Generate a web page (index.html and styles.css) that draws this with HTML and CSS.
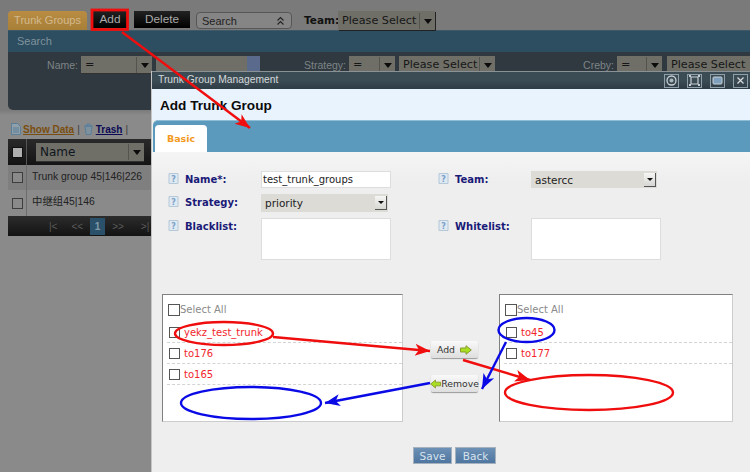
FILE: index.html
```html
<!DOCTYPE html>
<html lang="en">
<head>
<meta charset="utf-8">
<title>Trunk Group Management</title>
<link rel="stylesheet" href="styles.css">
</head>
<body>
<div class="page">
  <div class="toolbar">
    <div class="tab-title">Trunk Groups</div>
    <div class="blk add">Add</div>
    <div class="blk del">Delete</div>
    <div class="search-sel"><span>Search</span><svg width="9" height="10" viewBox="0 0 9 10"><path d="M1.5 4.5L4.5 1.5L7.5 4.5M1.5 8.5L4.5 5.5L7.5 8.5" fill="none" stroke="#222" stroke-width="1.1"/></svg></div>
    <b class="team">Team:</b>
    <div class="sel sel-team"><span>Please Select</span><i class="drop"></i></div>
  </div>
  <div class="searchbar">Search</div>
  <div class="filter">
    <span class="flabel l-name">Name:</span>
    <div class="sel s1"><span>=</span><i class="drop"></i></div>
    <div class="sel s2"><i class="drop-blue"></i></div>
    <span class="flabel l-strat">Strategy:</span>
    <div class="sel s3"><span>=</span><i class="drop"></i></div>
    <div class="sel s4"><span>Please Select</span><i class="drop"></i></div>
    <span class="flabel l-creby">Creby:</span>
    <div class="sel s5"><span>=</span><i class="drop"></i></div>
    <div class="sel s6"><span>Please Select</span></div>
  </div>
  <div class="links">
    <svg class="licon" width="10" height="12" viewBox="0 0 10 12"><path d="M.5.5H6.5L9.5 3.5V11.5H.5Z" fill="#8fa0aa" stroke="#5b7f99"/><path d="M2 5H8M2 7H8M2 9H8" stroke="#5b7f99"/></svg>
    <a class="show">Show Data</a><span class="bar">|</span>
    <svg class="licon" width="11" height="12" viewBox="0 0 11 12"><path d="M1 3H10M4 3V1H7V3M2 3L3 11.500H8L9 3Z" fill="#7d919e" stroke="#5b7f99"/></svg>
    <a class="trash">Trash</a><span class="bar">|</span>
  </div>
  <div class="grid-head">
    <div class="hcheck"><i class="cb light"></i></div>
    <div class="hname"><div class="sel s-name"><span>Name</span><i class="drop"></i></div></div>
  </div>
  <div class="grow r1"><div class="ccheck"><i class="cb"></i></div><div class="ctext">Trunk group 45|146|226</div></div>
  <div class="grow r2"><div class="ccheck"><i class="cb"></i></div><div class="ctext">中继组45|146</div></div>
  <div class="pager"><span class="p1">|&lt;</span><span class="p2">&lt;&lt;</span><b class="p3">1</b><span class="p4">&gt;&gt;</span><span class="p5">&gt;|</span></div>

  <div class="dialog">
    <div class="dtitle">
      <span class="dtitle-text">Trunk Group Management</span>
      <span class="wbtn"><svg width="13" height="13" viewBox="0 0 13 13"><circle cx="6.500" cy="6.500" r="4.500" fill="none" stroke="#c8d0d6" stroke-width="1.300"/><circle cx="6.500" cy="6.500" r="2" fill="#aab6be"/></svg></span>
      <span class="wbtn"><svg width="13" height="13" viewBox="0 0 13 13"><path d="M3 3H10V10H3Z" fill="none" stroke="#c8d0d6" stroke-width="1.200"/><path d="M1 1H3V3H1ZM10 1H12V3H10ZM1 10H3V12H1ZM10 10H12V12H10Z" fill="#c8d0d6"/></svg></span>
      <span class="wbtn"><svg width="13" height="13" viewBox="0 0 13 13"><rect x="2" y="3" width="9" height="7" rx="1" fill="#7fa0bc" stroke="#c8d0d6"/></svg></span>
      <span class="wbtn"><svg width="9" height="9" viewBox="0 0 9 9"><path d="M1.500 1.500L7.500 7.500M7.500 1.500L1.500 7.500" stroke="#d8dcde" stroke-width="1.200"/></svg></span>
    </div>
    <div class="dhead">Add Trunk Group</div>
    <div class="tabband"><div class="tab-basic">Basic</div></div>
    <div class="dbody">
      <div class="form">
        <svg class="help" viewBox="0 0 10 11"><path d="M.5.5H9.500V10.500H.5Z" fill="#dfe9f2" stroke="#b5c8d8"/><text x="5" y="8.500" text-anchor="middle">?</text></svg>
        <label>Name*:</label>
        <div class="input fld-input">test_trunk_groups</div>
        <svg class="help" viewBox="0 0 10 11"><path d="M.5.5H9.500V10.500H.5Z" fill="#dfe9f2" stroke="#b5c8d8"/><text x="5" y="8.500" text-anchor="middle">?</text></svg>
        <label>Team:</label>
        <div class="wsel w-team"><span>astercc</span><i class="wdrop"></i></div>

        <svg class="help" viewBox="0 0 10 11"><path d="M.5.5H9.500V10.500H.5Z" fill="#dfe9f2" stroke="#b5c8d8"/><text x="5" y="8.500" text-anchor="middle">?</text></svg>
        <label>Strategy:</label>
        <div class="wsel w-strat"><span>priority</span><i class="wdrop"></i></div>
        <span></span><span></span><span></span>

        <svg class="help" viewBox="0 0 10 11"><path d="M.5.5H9.500V10.500H.5Z" fill="#dfe9f2" stroke="#b5c8d8"/><text x="5" y="8.500" text-anchor="middle">?</text></svg>
        <label>Blacklist:</label>
        <div class="textarea"></div>
        <svg class="help" viewBox="0 0 10 11"><path d="M.5.5H9.500V10.500H.5Z" fill="#dfe9f2" stroke="#b5c8d8"/><text x="5" y="8.500" text-anchor="middle">?</text></svg>
        <label>Whitelist:</label>
        <div class="textarea"></div>
      </div>

      <div class="transfer">
        <div class="list list-l">
          <div class="all"><i class="cb big"></i><span>Select All</span></div>
          <div class="item"><i class="cb"></i><span>yekz_test_trunk</span></div>
          <div class="item"><i class="cb"></i><span>to176</span></div>
          <div class="item"><i class="cb"></i><span>to165</span></div>
        </div>
        <div class="mid">
          <div class="mbtn madd">Add<svg width="12" height="10" viewBox="0 0 12 10"><path d="M.5 3H6V.7L11.300 5L6 9.300V7H.5Z" fill="#a8e020" stroke="#8a9a30"/></svg></div>
          <div class="mbtn mrem"><svg width="11" height="10" viewBox="0 0 12 10"><path d="M11.500 3H6V.7L.7 5L6 9.300V7H11.500Z" fill="#a8e020" stroke="#8a9a30"/></svg><span>Remove</span></div>
        </div>
        <div class="list list-r">
          <div class="all"><i class="cb big"></i><span>Select All</span></div>
          <div class="item"><i class="cb"></i><span>to45</span></div>
          <div class="item"><i class="cb"></i><span>to177</span></div>
        </div>
      </div>

      <div class="actions">
        <div class="act a-save">Save</div>
        <div class="act a-back">Back</div>
      </div>
    </div>
  </div>

  <svg class="notes" width="750" height="472" viewBox="0 0 750 472">
    <defs>
      <marker id="hr" markerUnits="userSpaceOnUse" markerWidth="18" markerHeight="14" refX="15" refY="7" orient="auto"><path d="M0 1L15 7L0 13L4 7Z" fill="#f00d0d"/></marker>
      <marker id="hb" markerUnits="userSpaceOnUse" markerWidth="18" markerHeight="14" refX="15" refY="7" orient="auto"><path d="M0 1L15 7L0 13L4 7Z" fill="#0a0ae6"/></marker>
    </defs>
    <rect x="92" y="10" width="35.500" height="19.500" class="rd box"/>
    <line x1="122" y1="32" x2="250" y2="128" class="rd" marker-end="url(#hr)"/>
    <ellipse cx="224" cy="333.500" rx="49" ry="11.500" class="rd"/>
    <line x1="273" y1="337" x2="430" y2="351" class="rd" marker-end="url(#hr)"/>
    <line x1="463" y1="360" x2="530" y2="380" class="rd" marker-end="url(#hr)"/>
    <ellipse cx="589" cy="392.500" rx="84" ry="17.500" class="rd"/>
    <ellipse cx="526.500" cy="330" rx="28" ry="12" class="bl"/>
    <ellipse cx="251" cy="403" rx="70" ry="16" class="bl"/>
    <line x1="430" y1="383" x2="325" y2="403" class="bl" marker-end="url(#hb)"/>
    <line x1="506" y1="342" x2="482" y2="389" class="bl" marker-end="url(#hb)"/>
  </svg>
</div>
</body>
</html>
```

FILE: styles.css
```css
* { box-sizing: border-box; }
html, body { margin: 0; padding: 0; }
body { width: 750px; height: 472px; overflow: hidden; font-family: "Liberation Sans", Arial, sans-serif; }
.page { position: relative; width: 750px; height: 472px; overflow: hidden; background: linear-gradient(#7a7a7a 0, #7a7a7a 110px, #8a8a8a 115px, #8a8a8a 100%); }

.toolbar { display: flex; align-items: flex-start; height: 30px; padding: 11px 0 0 8px; }
.tab-title { width: 79px; height: 19px; background: linear-gradient(#b98c42, #a87f38); border-radius: 4px 4px 0 0; color: #d2ba8e; font-size: 11px; line-height: 18px; text-align: center; }
.blk { height: 17px; background: linear-gradient(#222, #000); color: #aaa; font-size: 11.800px; line-height: 17px; text-align: center; }
.add { width: 36px; margin-left: 5px; }
.del { width: 56px; margin-left: 6px; }
.search-sel { display: flex; align-items: center; justify-content: space-between; width: 96px; height: 17px; margin: 1px 0 0 6px; padding: 0 6px 0 5px; border: 1px solid #565656; border-radius: 4px; background: #858585; color: #222; font-size: 11px; }
.team { margin: 3px 0 0 12px; width: 34px; color: #111; font: bold 10.500px "DejaVu Sans", sans-serif; }

.sel { display: flex; align-items: center; height: 19px; background: #6f6f68; color: #171717; font: 11.200px "DejaVu Sans", sans-serif; padding-left: 4px; box-shadow: 0 1px 0 #333; }
.sel span { flex: 1; white-space: nowrap; }
.drop { display: block; flex: none; width: 15px; height: 16px; margin-right: 1px; border-left: 1px solid #54544f; position: relative; }
.drop::after { content: ""; position: absolute; left: 4px; top: 6px; border: 4px solid transparent; border-top: 5px solid #0c0c0c; border-bottom: 0; }
.sel-team { width: 97px; box-shadow: 1px 1px 0 #222; }

.searchbar { height: 22px; margin-left: 8px; background: #2d4d60; color: #7f929d; font-size: 11px; line-height: 21px; padding-left: 9px; border-top: 1px solid #3e5a68; }
.filter { display: flex; align-items: flex-start; height: 58px; margin-left: 8px; padding-top: 4px; background: #30393f; border-radius: 0 0 0 5px; }
.filter .sel { height: 17px; }
.flabel { color: #7e8487; font-size: 10.500px; line-height: 19px; text-align: right; }
.l-name { width: 70px; }
.s1 { width: 71px; margin-left: 3px; }
.s2 { width: 104px; margin-left: 4px; justify-content: flex-end; padding-left: 0; }
.drop-blue { width: 13px; height: 17px; background: #596a8c; }
.l-strat { width: 86px; }
.s3 { width: 46px; margin-left: 3px; }
.s4 { width: 96px; margin-left: 4px; }
.l-creby { width: 119px; }
.s5 { width: 45px; margin-left: 3px; }
.s6 { width: 83px; margin-left: 5px; }

.links { display: flex; align-items: center; gap: 2px; height: 29px; margin-left: 11px; padding-top: 9px; font: bold 10px "Liberation Sans", sans-serif; }
.licon { flex: none; }
.show { color: #7a4e10; text-decoration: underline; }
.trash { color: #0a0a55; text-decoration: underline; }
.bar { color: #3c3c3c; font-weight: normal; margin: 0 1px; }

.grid-head { display: flex; height: 26px; margin-left: 8px; background: linear-gradient(#2a2a2a, #141414); }
.hcheck { display: flex; align-items: center; justify-content: center; width: 19px; height: 26px; border-right: 1px solid #555; }
.hname { padding: 4px 0 0 9px; }
.s-name { width: 108px; color: #10151d; height: 18px; font-size: 12px; }

.cb { display: block; flex: none; width: 11px; height: 11px; border: 1px solid #555; background: #fff; }
.grow { display: flex; margin-left: 8px; color: #222; font: 10.400px "Liberation Sans", "Noto Sans CJK SC", sans-serif; }
.grow .cb { background: #8a8a8a; border-color: #3d3d3d; }
.hcheck .cb.light { background: #b0b0b0; border-color: #111; }
.r1 { height: 25px; background: #7f7f7f; }
.r2 { height: 26px; background: #8a8a8a; }
.ccheck { display: flex; align-items: center; justify-content: center; width: 19px; border-right: 1px solid #6c6c6c; }
.ctext { padding-left: 5px; line-height: 24px; white-space: nowrap; }
.pager { display: flex; align-items: center; height: 20px; margin-left: 8px; padding-left: 41px; background: linear-gradient(#2c2c2c, #131313); color: #5a5a5a; font-size: 10px; }
.pager b { width: 15px; height: 17px; background: #2b5069; color: #8399a6; text-align: center; line-height: 17px; }
.p2 { margin-left: 14px; }
.p3 { margin-left: 7px; }
.p4 { margin-left: 7px; }
.p5 { margin-left: 17px; }

.dialog { position: absolute; left: 151px; top: 71px; width: 599px; height: 401px; border-left: 1px solid #c5c5c5; background: #eee; display: flex; flex-direction: column; }
.dtitle { display: flex; align-items: center; gap: 8px; height: 18px; padding: 0 2px 0 6px; background: linear-gradient(#3c4c54 0, #3c4c54 50%, #2f3d45 100%); border-top: 1px solid #8a9296; color: #d4d8da; font-size: 10.300px; }
.dtitle-text { flex: 1; margin-top: -2px; }
.wbtn { display: flex; align-items: center; justify-content: center; width: 15px; height: 14px; border: 1px solid #8fa0aa; }
.dhead { height: 31px; background: #e9f3fd; color: #0a0a0a; font-size: 13.600px; font-weight: bold; line-height: 33px; padding-left: 8px; }
.tabband { height: 32px; margin-left: 1px; padding: 4px 0 0 2px; background: #5b9abd; border-top: 1px solid #8dbcd4; border-radius: 5px 0 0 0; }
.tab-basic { width: 52px; height: 27px; background: #fff; border-radius: 4px 4px 0 0; color: #f39a1e; font: bold 9.500px "DejaVu Sans", sans-serif; line-height: 28px; text-align: center; }
.dbody { flex: 1; background: linear-gradient(#f5f5f5, #eee 30px); display: flex; flex-direction: column; }

.form { display: grid; grid-template-columns: 17px 76px 177px 17px 76px 130px; grid-template-rows: 23px 24px 42px; margin: 19px 0 0 16px; }
.help { width: 11px; height: 11px; margin-top: 2px; }
.help text { font: bold 8px "DejaVu Sans", sans-serif; fill: #7c9fca; }
.form label { color: #1a1a78; font: bold 10px "DejaVu Sans", sans-serif; line-height: 18px; }
.input { width: 130px; height: 17px; border: 1px solid #ddd; background: #fff; color: #222; font: 10px "DejaVu Sans", sans-serif; line-height: 15px; padding-left: 1px; }
.wsel { display: flex; align-items: center; justify-content: space-between; height: 17px; background: #dcdbd6; color: #222; font: 10.500px "DejaVu Sans", sans-serif; padding: 0 1px 0 4px; }
.w-team { width: 126px; }
.w-strat { width: 127px; height: 18px; }
.wdrop { display: block; width: 12px; height: 14px; background: linear-gradient(#f6f6f4, #d6d6d2); border-right: 1px solid #555; border-bottom: 1px solid #555; position: relative; }
.wdrop::after { content: ""; position: absolute; left: 3px; top: 5px; border: 3px solid transparent; border-top: 3px solid #111; border-bottom: 0; }
.textarea { width: 130px; height: 42px; border: 1px solid #ddd; background: #fff; }

.transfer { display: flex; margin: 34px 0 0 10px; }
.list { height: 128px; background: #fff; border: 1px solid #ccc; border-top-color: #808080; border-left-color: #808080; padding-top: 5px; font: 10px "DejaVu Sans", sans-serif; }
.list-l { width: 241px; }
.list-r { width: 234px; }
.all { display: flex; align-items: center; height: 19px; margin-bottom: 3px; padding-left: 5px; color: #8a8a8a; }
.all .cb { width: 12px; height: 12px; }
.item { display: flex; align-items: center; height: 21px; margin-left: 4px; padding-left: 2px; border-bottom: 1px dashed #d4d4d4; color: #f2262c; }
.item .cb { margin-right: 4px; }
.mid { display: flex; flex-direction: column; gap: 17px; width: 96px; padding: 47px 0 0 28px; }
.mbtn { display: flex; align-items: center; justify-content: center; gap: 5px; width: 47px; height: 17px; border-radius: 2px; background: linear-gradient(#f9f9f9, #dedede); box-shadow: 0 1px 1px #999; color: #333; font: 9.300px "DejaVu Sans", sans-serif; white-space: nowrap; }
.mbtn svg { flex: none; }
.mrem { gap: 0; }
.actions { display: flex; gap: 3px; margin: 25px 0 0 261px; }
.act { height: 17px; background: linear-gradient(#6d90b5, #4e76a0); border: 1px solid #a5b1bd; color: #d8e3ee; font: 10.500px "DejaVu Sans", sans-serif; line-height: 16px; text-align: center; }
.a-save { width: 39px; }
.a-back { width: 41px; }

.notes { position: absolute; left: 0; top: 0; pointer-events: none; }
.notes .rd { fill: none; stroke: #f00d0d; stroke-width: 2.400; }
.notes .box { stroke-width: 2.800; }
.notes .bl { fill: none; stroke: #0a0ae6; stroke-width: 2.400; }
```
